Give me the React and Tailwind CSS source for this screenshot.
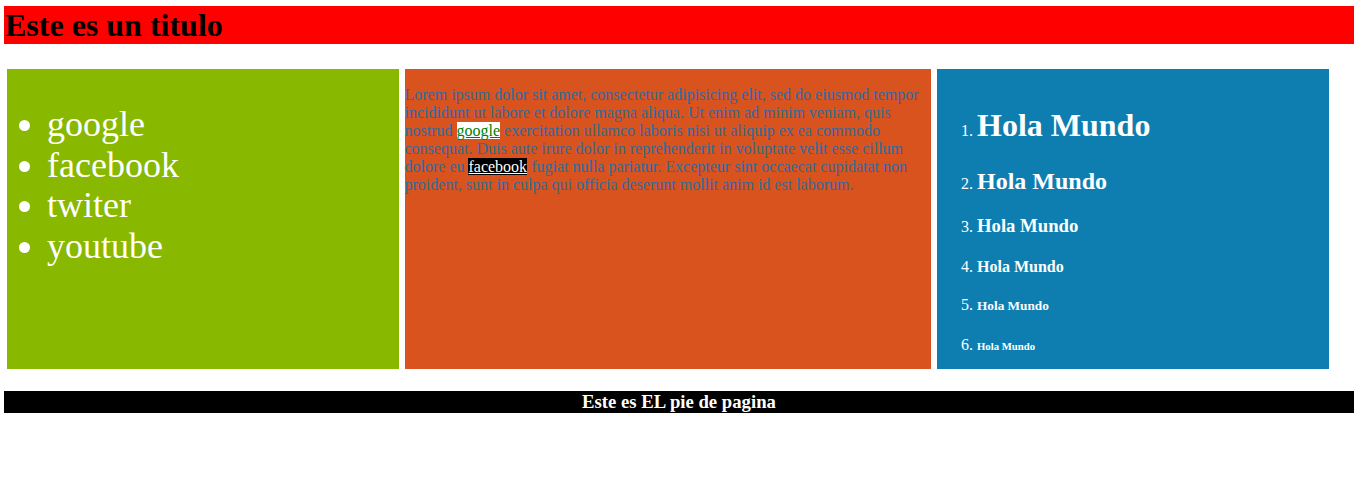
export default function App() {
  return (
    <div className="bg-white min-h-[478px] w-[1368px] pt-[6px] pl-[4px] font-['Liberation_Serif',serif]">
      <div className="w-[1350px]">
        <header className="h-[38px] bg-[#ff0000] flex items-center pl-[1px]">
          <h1 className="text-[32px] font-bold leading-[normal] text-black">Este es un titulo</h1>
        </header>

        <div className="flex mt-[25px] h-[300px]">
          <div className="w-[29%] mx-[3px] bg-[#88b800] text-white">
            <ul className="list-disc pl-10 pt-[35px] text-[36px] leading-[40.7px]">
              <li>google</li>
              <li>facebook</li>
              <li>twiter</li>
              <li>youtube</li>
            </ul>
          </div>

          <div className="w-[39%] mx-[3px] bg-[#d9531f] text-[#336a9c] text-[16px] leading-[18px]">
            <p className="pt-[17px]">
              Lorem ipsum dolor sit amet, consectetur adipisicing elit, sed do eiusmod tempor<br />
              incididunt ut labore et dolore magna aliqua. Ut enim ad minim veniam, quis<br />
              nostrud <a className="bg-white text-[#008000] underline">google</a> exercitation ullamco laboris nisi ut aliquip ex ea commodo<br />
              consequat. Duis aute irure dolor in reprehenderit in voluptate velit esse cillum<br />
              dolore eu <a className="bg-black text-white underline">facebook</a> fugiat nulla pariatur. Excepteur sint occaecat cupidatat non<br />
              proident, sunt in culpa qui officia deserunt mollit anim id est laborum.
            </p>
          </div>

          <div className="w-[29%] mx-[3px] bg-[#0e7eb1] text-white">
            <ol className="list-decimal pl-10 pt-[38px] text-[16px] leading-[normal]">
              <li><div className="text-[32px] font-bold leading-[normal]">Hola Mundo</div></li>
              <li className="mt-[24px]"><div className="text-[24px] font-bold leading-[normal]">Hola Mundo</div></li>
              <li className="mt-[20px]"><div className="text-[18.72px] font-bold leading-[normal]">Hola Mundo</div></li>
              <li className="mt-[21px]"><div className="text-[16px] font-bold leading-[normal]">Hola Mundo</div></li>
              <li className="mt-[20px]"><div className="text-[13.28px] font-bold leading-[normal]">Hola Mundo</div></li>
              <li className="mt-[22px]"><div className="text-[10.72px] font-bold leading-[normal]">Hola Mundo</div></li>
            </ol>
          </div>
        </div>

        <footer className="mt-[22px] h-[22px] bg-black text-white flex items-center justify-center">
          <span className="text-[18.72px] font-bold leading-[normal]">Este es EL pie de pagina</span>
        </footer>
      </div>
    </div>
  );
}
